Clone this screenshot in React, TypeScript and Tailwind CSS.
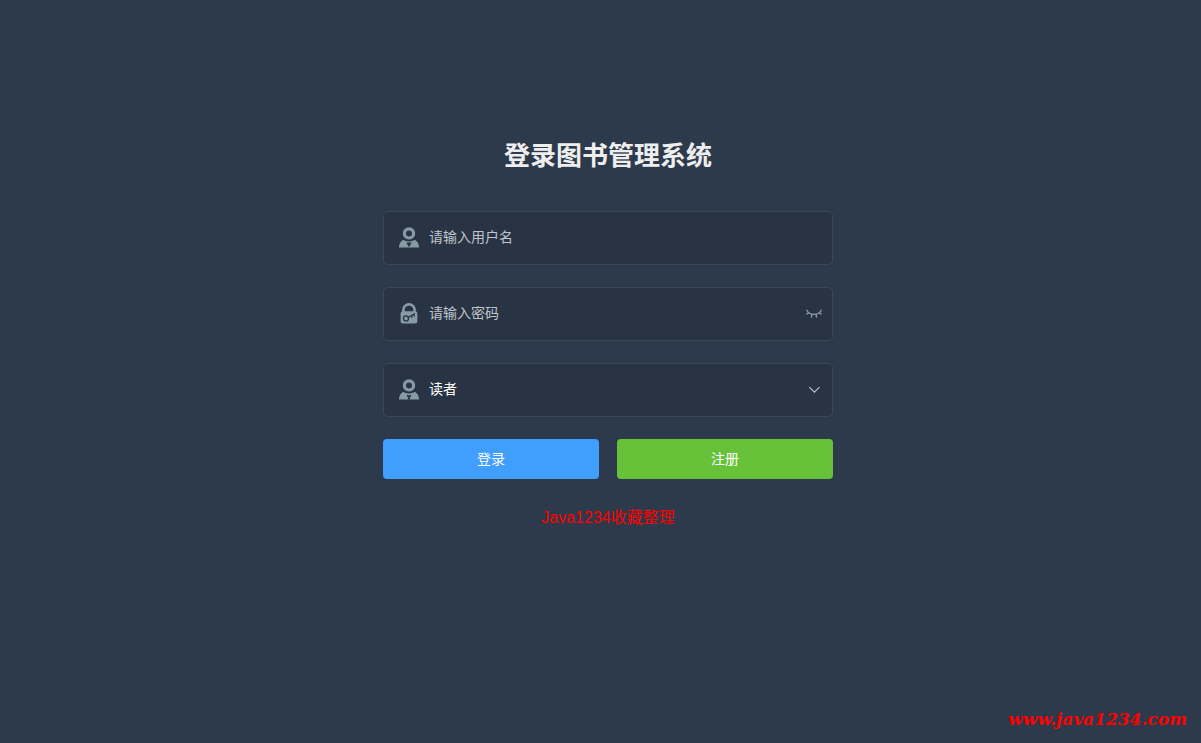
import React, { useState } from 'react';

const fieldClass =
  'flex h-[54px] items-center gap-2.5 rounded-[5px] border border-[#3b4857] bg-[#283443] pb-0.5 pl-[15px] pr-2.5';

const controlClass =
  'h-full min-w-0 flex-1 appearance-none bg-transparent text-sm outline-none';

const UserIcon: React.FC = () => (
  <svg viewBox="0 0 20 21" className="h-[21px] w-5 shrink-0" aria-hidden="true">
    <circle cx="10" cy="6.4" r="4.6" fill="none" stroke="#889aa4" strokeWidth="3.2" />
    <path
      d="M0 20.6 C0 17 1.4 14.4 4.2 12.8 C7.4 15 12.6 15 15.8 12.8 C18.6 14.4 20 17 20 20.6 Z"
      fill="#889aa4"
    />
    <path d="M7.4 15.4 H12.6 L10.6 19.6 H9.4 Z" fill="#283443" />
  </svg>
);

const RoleIcon: React.FC = () => (
  <svg viewBox="0 0 20 21" className="h-[21px] w-5 shrink-0" aria-hidden="true">
    <circle cx="10" cy="6.4" r="4.6" fill="none" stroke="#889aa4" strokeWidth="3.2" />
    <path
      d="M0 20.6 C0 17 1.4 14.4 4.2 12.8 C7.4 15 12.6 15 15.8 12.8 C18.6 14.4 20 17 20 20.6 Z"
      fill="#889aa4"
    />
    <path d="M8 15.6 L10 16.4 L12 15.6 V18 L10.8 17.6 L11.2 20.6 H8.8 L9.2 17.6 L8 18 Z" fill="#283443" />
  </svg>
);

const LockIcon: React.FC = () => (
  <svg viewBox="0 0 20 21" className="h-[21px] w-5 shrink-0" aria-hidden="true">
    <path d="M4.4 9.5 V6.6 A5.6 5.2 0 0 1 15.6 6.6 V9.5" fill="none" stroke="#889aa4" strokeWidth="2.6" />
    <rect x="1.6" y="8.2" width="16.8" height="12.4" rx="2.4" fill="#889aa4" />
    <g fill="none" stroke="#283443" strokeWidth="1.3" strokeLinecap="round">
      <circle cx="7" cy="15.4" r="2.5" />
      <path d="M9.2 14.2 L15.6 10.8 M12.2 12.6 L13.1 14.4 M14.6 11.4 L15.4 13" />
    </g>
  </svg>
);

const EyeClosedIcon: React.FC = () => (
  <svg viewBox="0 0 16 10" className="h-2.5 w-4" fill="none" stroke="#889aa4" strokeWidth="1.3" strokeLinecap="round" aria-hidden="true">
    <path d="M0.8 2.2 C3.6 7.8 12.4 7.8 15.2 2.2" />
    <path d="M2.7 4.4 L0.9 6 M6 6.4 L5.4 9.2 M10 6.4 L10.6 9.2 M13.3 4.4 L15.1 6" />
  </svg>
);

const ChevronIcon: React.FC = () => (
  <svg viewBox="0 0 12 8" className="mr-0.5 h-2 w-3 shrink-0" fill="none" stroke="#b4bac6" strokeWidth="1.2" strokeLinecap="round" aria-hidden="true">
    <path d="M1.6 2.4 L6.4 7.2 L11.2 2.4" />
  </svg>
);

export default function App() {
  const [showPassword, setShowPassword] = useState(false);

  return (
    <div className="flex min-h-screen flex-col bg-[#2d3a4b] font-['Liberation_Sans','Noto_Sans_CJK_SC',sans-serif]">
      <main className="flex flex-1 flex-col items-center pl-[15px] pt-[136px]">
        <form className="w-full max-w-[450px]" onSubmit={(e) => e.preventDefault()}>
          <h1 className="mb-[35px] text-center text-[26px] leading-10 font-bold text-[#eeeeee]">
            登录图书管理系统
          </h1>

          <div className="flex flex-col gap-[22px]">
            <div className={fieldClass}>
              <UserIcon />
              <input
                type="text"
                aria-label="用户名"
                placeholder="请输入用户名"
                className={`${controlClass} text-white placeholder:text-[#c0c4cc]`}
              />
            </div>

            <div className={fieldClass}>
              <LockIcon />
              <input
                type={showPassword ? 'text' : 'password'}
                aria-label="密码"
                placeholder="请输入密码"
                className={`${controlClass} text-white placeholder:text-[#c0c4cc]`}
              />
              <button
                type="button"
                aria-label="显示密码"
                onClick={() => setShowPassword(!showPassword)}
                className="shrink-0 cursor-pointer"
              >
                <EyeClosedIcon />
              </button>
            </div>

            <div className={fieldClass}>
              <RoleIcon />
              <select aria-label="角色" defaultValue="reader" className={`${controlClass} text-white`}>
                <option value="reader">读者</option>
              </select>
              <ChevronIcon />
            </div>

            <div className="grid grid-cols-2 gap-[18px] text-sm text-white">
              <button type="submit" className="h-10 cursor-pointer rounded bg-[#409eff]">
                登录
              </button>
              <button type="button" className="h-10 cursor-pointer rounded bg-[#67c23a]">
                注册
              </button>
            </div>
          </div>

          <p className="mt-[27px] text-center text-base text-[#ff0000]">Java1234收藏整理</p>
        </form>
      </main>

      <footer className="flex justify-end px-3.5 pb-3">
        <a
          href="http://www.java1234.com"
          className="font-['DejaVu_Serif',serif] text-[17px] leading-6 font-bold text-[#ff0000] italic"
        >
          www.java1234.com
        </a>
      </footer>
    </div>
  );
}
